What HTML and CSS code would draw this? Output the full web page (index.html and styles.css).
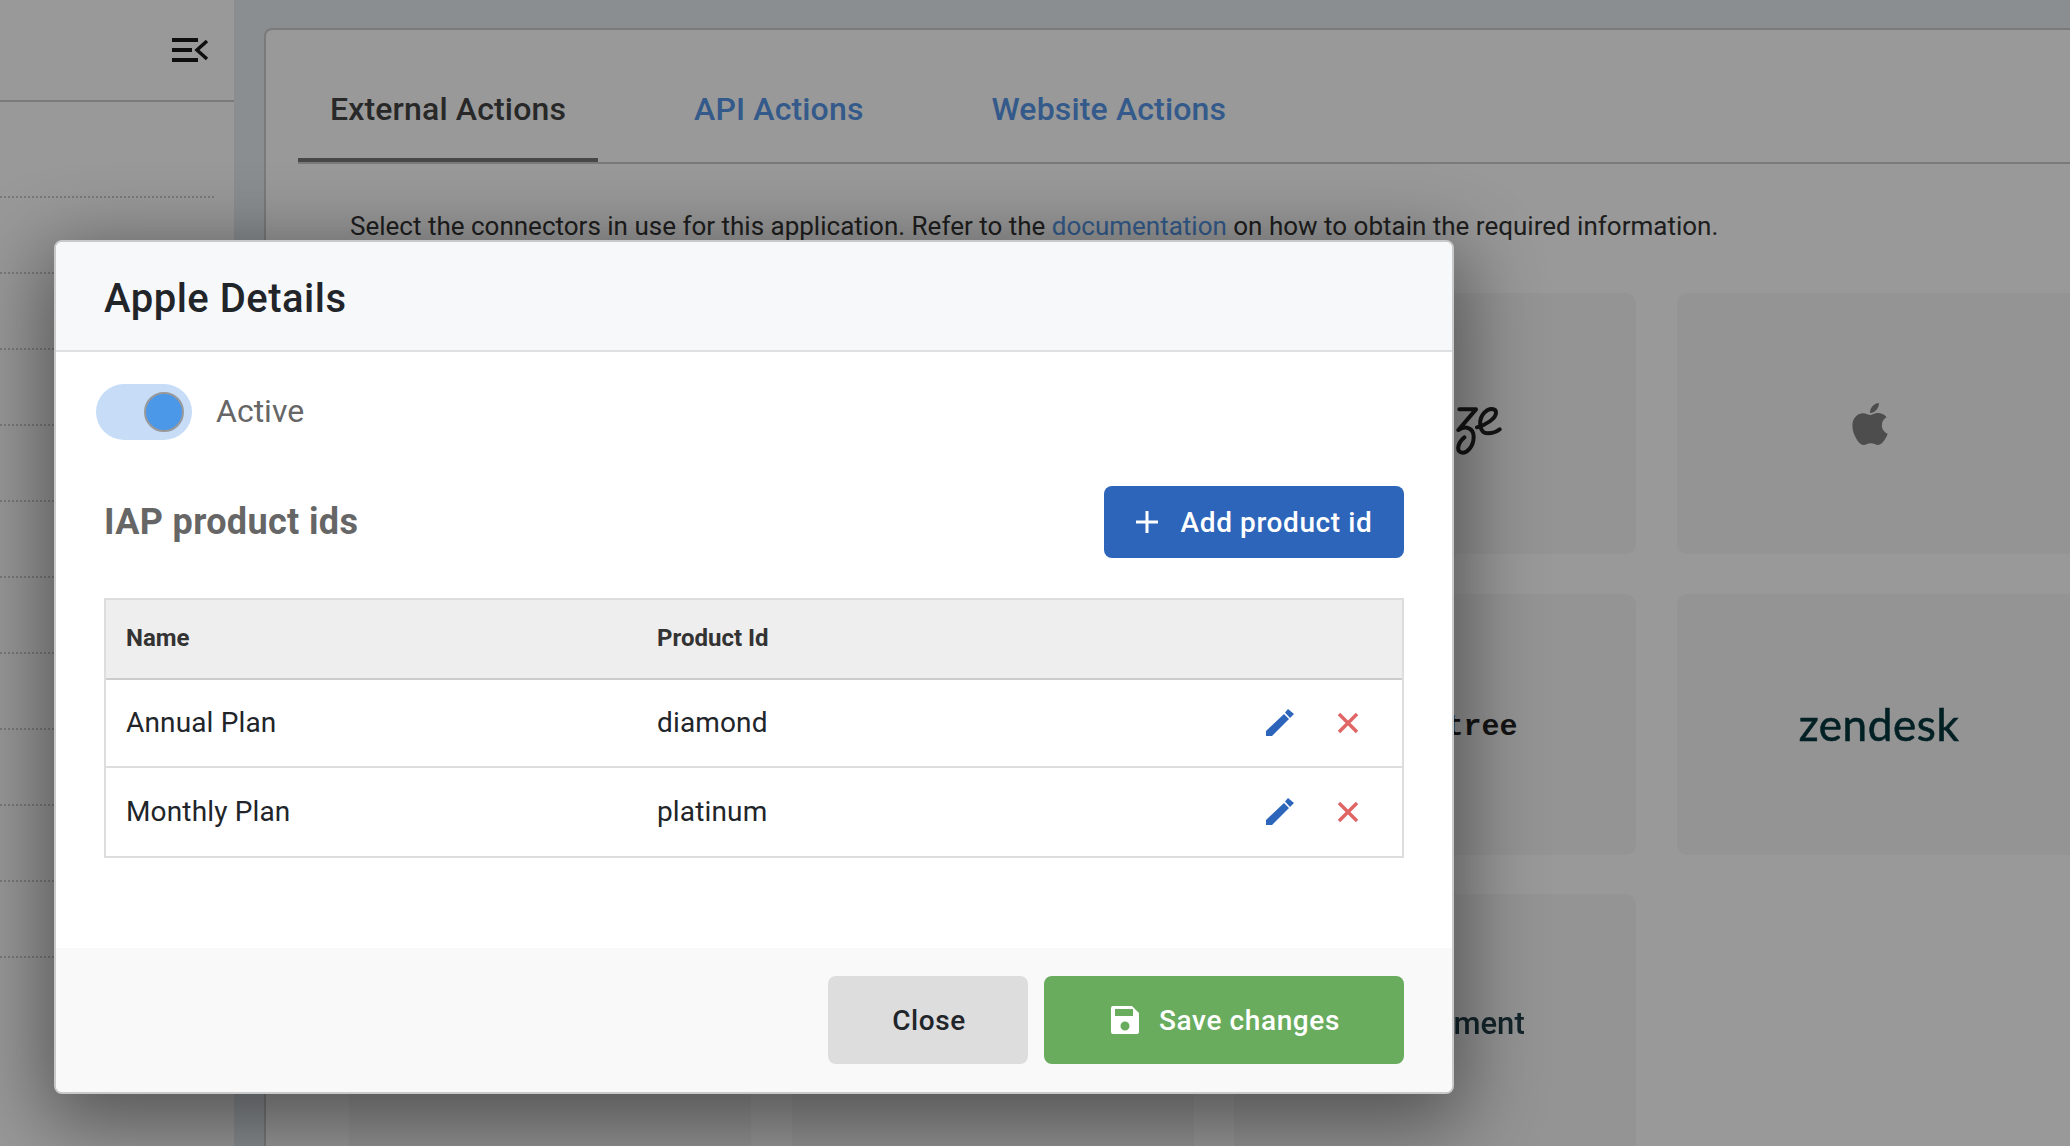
FILE: index.html
```html
<!DOCTYPE html>
<html lang="en">
<head>
<meta charset="utf-8">
<title>Apple Details</title>
<link rel="stylesheet" href="styles.css">
</head>
<body>
<div class="page">
  <aside class="sidebar">
    <div class="side-head">
      <svg class="menu-icon" viewBox="0 0 38 26" aria-hidden="true">
        <path class="bar" d="M0 0h26v4H0zM0 10h20v4H0zM0 20h26v4H0z"/>
        <path class="chev" d="M35 3 25 12l10 9"/>
      </svg>
    </div>
    <ul class="side-list">
      <li></li><li></li><li></li><li></li><li></li><li></li><li></li><li></li><li></li><li></li><li></li>
    </ul>
  </aside>
  <main class="main">
    <section class="card">
      <nav class="tabs">
        <a class="tab active">External Actions</a>
        <a class="tab">API Actions</a>
        <a class="tab">Website Actions</a>
      </nav>
      <p class="intro">Select the connectors in use for this application. Refer to the <a class="link">documentation</a> on how to obtain the required information.</p>
      <div class="tiles">
        <div class="tile"></div>
        <div class="tile"></div>
        <div class="tile">
          <svg class="braze" viewBox="0 0 300 300" aria-label="braze">
            <path d="M55 88H105L52 150C75 135 98 145 98 170C98 200 78 218 65 218C45 218 48 190 70 172"/>
            <path d="M108 142C135 135 165 115 165 98C165 85 145 82 130 98C110 120 115 160 140 160C155 160 168 155 176 148"/>
          </svg>
        </div>
        <div class="tile">
          <svg class="apple" viewBox="0 0 384 512" aria-label="Apple"><path d="M318.7 268.7c-.2-36.7 16.4-64.4 50-84.8-18.8-26.9-47.2-41.7-84.7-44.6-35.5-2.8-74.3 20.7-88.5 20.7-15 0-49.4-19.7-76.4-19.7C63.3 141.2 4 184.8 4 273.5q0 39.3 14.4 81.2c12.8 36.7 59 126.7 107.2 125.2 25.2-.6 43-17.9 75.8-17.9 31.8 0 48.3 17.9 76.4 17.9 48.6-.7 90.4-82.5 102.6-119.3-65.2-30.7-61.7-90-61.7-91.9zm-56.6-164.2c27.3-32.4 24.8-61.9 24-72.5-24.1 1.4-52 16.4-67.9 34.9-17.5 19.8-27.8 44.3-25.6 71.9 26.1 2 49.9-11.4 69.5-34.3z"/></svg>
        </div>
        <div class="tile"></div>
        <div class="tile"></div>
        <div class="tile"><span class="logo-braintree">braintree</span></div>
        <div class="tile"><span class="logo-zendesk">zendesk</span></div>
        <div class="tile"></div>
        <div class="tile"></div>
        <div class="tile"><span class="logo-ment">Engagement</span></div>
      </div>
    </section>
  </main>
</div>

<div class="backdrop"></div>

<div class="modal">
  <header class="modal-head"><h2>Apple Details</h2></header>
  <div class="modal-body">
    <div class="toggle-row">
      <span class="toggle"><span class="knob"></span></span>
      <span class="toggle-label">Active</span>
    </div>
    <div class="section-row">
      <h3>IAP product ids</h3>
      <button class="btn btn-blue">
        <svg class="plus" viewBox="0 0 22 22" aria-hidden="true"><path d="M11 0v22M0 11h22"/></svg>
        <span>Add product id</span>
      </button>
    </div>
    <table class="ids">
      <thead>
        <tr><th>Name</th><th>Product Id</th><th></th></tr>
      </thead>
      <tbody>
        <tr class="row-a">
          <td>Annual Plan</td><td>diamond</td>
          <td class="acts">
            <div class="act-wrap">
              <svg class="pencil" viewBox="0 0 28 28" aria-label="Edit"><path d="M0 27v-5L18 5l5 5L6 27zM19 3.500l3-3.500 6 5-4 4z"/></svg>
              <svg class="cross" viewBox="0 0 20 20" aria-label="Delete"><path d="M1 1l18 18M19 1 1 19"/></svg>
            </div>
          </td>
        </tr>
        <tr class="row-b">
          <td>Monthly Plan</td><td>platinum</td>
          <td class="acts">
            <div class="act-wrap">
              <svg class="pencil" viewBox="0 0 28 28" aria-label="Edit"><path d="M0 27v-5L18 5l5 5L6 27zM19 3.500l3-3.500 6 5-4 4z"/></svg>
              <svg class="cross" viewBox="0 0 20 20" aria-label="Delete"><path d="M1 1l18 18M19 1 1 19"/></svg>
            </div>
          </td>
        </tr>
      </tbody>
    </table>
  </div>
  <footer class="modal-foot">
    <button class="btn btn-grey">Close</button>
    <button class="btn btn-green">
      <svg class="disk" viewBox="0 0 28 28" aria-hidden="true"><path fill-rule="evenodd" d="M2 0h19l7 7v19a2 2 0 0 1-2 2H2a2 2 0 0 1-2-2V2a2 2 0 0 1 2-2zM4 3v7h18V3zM14 15.500a4.500 4.500 0 1 0 0 9 4.500 4.500 0 0 0 0-9z"/></svg>
      <span>Save changes</span>
    </button>
  </footer>
</div>
</body>
</html>
```
FILE: styles.css
```css
* { box-sizing: border-box; }
html, body { margin: 0; height: 1146px; overflow: hidden; }
body { font-family: Roboto, "Liberation Sans", sans-serif; color: #212529; background: #e6edf2; }

.page { display: flex; height: 1146px; overflow: hidden; }

.sidebar { flex: 0 0 234px; background: #fff; }
.side-head { height: 102px; border-bottom: 2px solid #ccc; padding: 38px 0 0 172px; }
.menu-icon { display: block; width: 38px; height: 26px; }
.menu-icon .bar { fill: #1a1a1a; }
.menu-icon .chev { fill: none; stroke: #1a1a1a; stroke-width: 3.500; }
.side-list { list-style: none; margin: 20px 20px 0 0; padding: 0; }
.side-list li { height: 76px; border-bottom: 2px dotted #ccc; }

.main { flex: 1; min-width: 0; padding: 28px 0 0 30px; }
.card { width: 1900px; height: 1300px; background: #fff; border: 2px solid #ccc; border-radius: 8px 0 0 0; padding: 0 0 0 32px; }

.tabs { display: flex; gap: 64px; height: 134px; border-bottom: 2px solid #ccc; }
.tab { height: 132px; padding: 0 32px; line-height: 158px; font-size: 32px; font-weight: 500; letter-spacing: .15px; color: #5596e6; }
.tab.active { color: #444; border-bottom: 4px solid #777; }

.intro { margin: 41px 0 0 52px; font-size: 26px; line-height: 42px; color: #333; }
.link { color: #5596e6; }

.tiles { display: grid; grid-template-columns: repeat(4, 402px); grid-auto-rows: 261px; column-gap: 40.5px; row-gap: 39.5px; margin: 46px 0 0 51px; }
.tile { display: flex; align-items: center; justify-content: center; background: #f7f7f7; border-radius: 10px; }

.braze { width: 100px; height: 100px; margin-left: 111px; margin-top: 13px; }
.braze path { fill: none; stroke: #222; stroke-width: 12; stroke-linecap: round; stroke-linejoin: round; filter: blur(1px); }
.apple { width: 36px; height: 48px; fill: #808080; margin-left: -16px; }
.logo-braintree { font-family: "Liberation Mono", monospace; font-weight: 700; font-size: 30px; color: #222; margin-top: 6px; margin-left: 3px; }
.logo-zendesk { font-family: Lato, sans-serif; font-weight: 400; font-size: 44px; letter-spacing: .6px; color: #03363d; margin-left: 3px; -webkit-text-stroke: .6px #03363d; filter: blur(.5px); }
.logo-ment { font-family: Roboto, sans-serif; font-weight: 500; font-size: 31px; color: #1e3d47; margin-top: -2px; margin-left: 5px; filter: blur(.6px); }

.backdrop { position: absolute; inset: 0; background: rgba(0, 0, 0, .4); }

.modal { position: absolute; left: 54px; top: 240px; width: 1400px; height: 854px; display: flex; flex-direction: column; background: #fff; border: 2px solid #c9c9c9; border-radius: 8px; box-shadow: 0 20px 80px 10px rgba(0, 0, 0, .45); overflow: hidden; }

.modal-head { height: 110px; flex: none; display: flex; align-items: center; padding: 5px 0 0 48px; background: #f7f8fa; border-bottom: 2px solid #dee0e2; }
.modal-head h2 { margin: 0; font-size: 40px; font-weight: 500; letter-spacing: .5px; color: #212529; }

.modal-body { flex: 1; padding: 32px 48px 0 48px; }

.toggle-row { display: flex; align-items: center; gap: 24px; margin-left: -8px; height: 56px; }
.toggle { display: flex; align-items: center; justify-content: flex-end; width: 96px; height: 56px; padding-right: 8px; background: #c6dcf7; border-radius: 28px; }
.knob { width: 40px; height: 40px; background: #4c98e8; border: 2px solid #999; border-radius: 50%; }
.toggle-label { padding-bottom: 2px; font-size: 32px; color: #666; }

.section-row { display: flex; align-items: center; justify-content: space-between; margin-top: 46px; }
.section-row h3 { margin: 0; font-size: 36px; font-weight: 700; letter-spacing: .35px; color: #666; }

.btn { display: flex; align-items: center; justify-content: center; border: 0; border-radius: 8px; font-family: inherit; font-size: 28px; font-weight: 500; letter-spacing: .6px; }
.btn-blue { width: 300px; height: 72px; gap: 23px; background: #2d65bb; color: #fff; }
.plus { width: 22px; height: 22px; fill: none; stroke: #fff; stroke-width: 3; }
.btn-grey { width: 200px; height: 88px; padding: 0 0 0 2px; background: #ddd; color: #212529; }
.btn-green { width: 360px; height: 88px; gap: 20px; padding: 0 0 0 3px; background: #69ac5e; color: #fff; }
.disk { width: 28px; height: 28px; fill: #fff; }

.ids { width: 1300px; margin-top: 40px; table-layout: fixed; border-collapse: separate; border-spacing: 0; border: 2px solid #ddd; font-size: 28px; letter-spacing: .15px; color: #212529; }
.ids th, .ids td { padding: 0 0 2px 21px; text-align: left; }
.ids th:first-child, .ids td:first-child { padding-left: 20px; }
.ids th { height: 80px; background: #eee; border-bottom: 2px solid #ccc; font-size: 24px; font-weight: 700; letter-spacing: 0; color: #333; }
.ids th:nth-child(1), .ids td:nth-child(1) { width: 530px; }
.ids th:nth-child(2), .ids td:nth-child(2) { width: 600px; }
.row-a td { height: 88px; border-bottom: 2px solid #ddd; }
.row-b td { height: 88px; }
.ids td.acts { padding: 0 0 0 30px; }
.act-wrap { display: flex; align-items: center; gap: 44px; }
.pencil { flex: none; width: 28px; height: 28px; fill: #2d65bb; }
.cross { flex: none; width: 20px; height: 20px; fill: none; stroke: #e06666; stroke-width: 3.500; }

.modal-foot { height: 144px; flex: none; display: flex; justify-content: flex-end; gap: 16px; padding: 28px 48px 0 0; background: #f9f9f9; }
```
